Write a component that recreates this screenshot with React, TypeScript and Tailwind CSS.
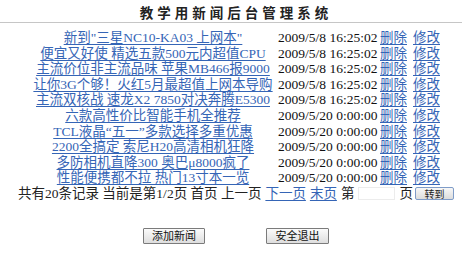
import React from 'react'

const rows = [
  { title: '新到"三星NC10-KA03 上网本"', time: '2009/5/8 16:25:02' },
  { title: '便宜又好使 精选五款500元内超值CPU', time: '2009/5/8 16:25:02' },
  { title: '主流价位非主流品味 苹果MB466报9000', time: '2009/5/8 16:25:02' },
  { title: '让你3G个够！火红5月最超值上网本导购', time: '2009/5/8 16:25:02' },
  { title: '主流双核战 速龙X2 7850对决奔腾E5300', time: '2009/5/8 16:25:02' },
  { title: '六款高性价比智能手机全推荐', time: '2009/5/20 0:00:00' },
  { title: 'TCL液晶“五一”多款选择多重优惠', time: '2009/5/20 0:00:00' },
  { title: '2200全搞定 索尼H20高清相机狂降', time: '2009/5/20 0:00:00' },
  { title: '多防相机直降300 奥巴μ8000疯了', time: '2009/5/20 0:00:00' },
  { title: '性能便携都不拉 热门13寸本一览', time: '2009/5/20 0:00:00' },
]

const font = { fontFamily: '"Liberation Serif", "Noto Sans CJK SC", serif' }
const sans = { fontFamily: '"Noto Sans CJK SC", sans-serif' }
const link = 'text-[#3565b6] underline underline-offset-[2px] decoration-[1px]'
const btn =
  'border border-[#7b7b7b] bg-gradient-to-b from-[#fbfbfb] to-[#dedede] text-[#111] text-[11px] leading-none rounded-[1px]'

export default function App() {
  return (
    <div className="w-[462px] h-[265px] bg-white text-black text-[13.5px]" style={font}>
      {/* Title */}
      <div className="pl-[10px] pt-[4px] h-[20px] flex justify-center">
        <span className="text-[13.5px] leading-[16px] font-bold tracking-[4px] text-[#222]" style={sans}>
          教学用新闻后台管理系统
        </span>
      </div>
      <div className="mt-[2px] border-t border-[#c6c6c6]" />

      {/* News list */}
      <div className="pl-[32px] mt-[7px]">
        {rows.map((r, i) => (
          <div key={i} className="flex items-center h-[15.6px] leading-[15.6px] whitespace-nowrap">
            <div className="w-[242px] text-center">
              <a className={link}>{r.title}</a>
            </div>
            <div className="ml-[4px] w-[102px] text-[#111]">{r.time}</div>
            <a className={link}>删除</a>
            <a className={`${link} ml-[6px]`}>修改</a>
          </div>
        ))}
      </div>

      {/* Paging */}
      <div className="pl-[18px] h-[16px] flex items-center whitespace-nowrap text-[#222]">
        <span>共有20条记录 当前是第1/2页 首页 上一页 </span>
        <a className={`${link} ml-[4px]`}>下一页</a>
        <a className={`${link} ml-[4px]`}>末页</a>
        <span className="ml-[4px]">第</span>
        <input className="ml-[4px] w-[37px] h-[13px] border border-[#ececec] outline-none" />
        <span className="ml-[4px]">页</span>
        <button
          className="ml-[2px] w-[39px] h-[13px] border border-[#7f9cc8] bg-gradient-to-b from-[#f8f8f8] to-[#dcdcdc] text-[10px] leading-none rounded-[2px]"
          style={sans}
        >
          转到
        </button>
      </div>

      {/* Actions */}
      <div className="mt-[26px] pl-[10px] flex justify-center gap-[61px]">
        <button className={`${btn} w-[62px] h-[16px]`} style={sans}>
          添加新闻
        </button>
        <button className={`${btn} w-[63px] h-[16px]`} style={sans}>
          安全退出
        </button>
      </div>
    </div>
  )
}
